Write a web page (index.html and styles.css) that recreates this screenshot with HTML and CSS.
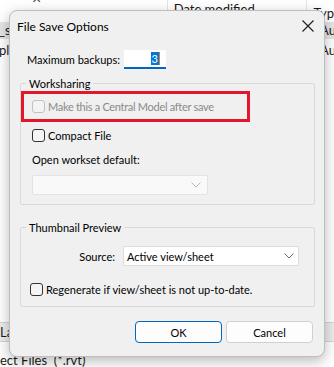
FILE: index.html
```html
<!DOCTYPE html>
<html lang="en">
  <head>
    <meta charset="UTF-8" />
    <meta name="viewport" content="width=device-width, initial-scale=1.0" />
    <title>File Save Options</title>
    <link rel="stylesheet" href="styles.css">
  </head>

  <body>
    <div class="explorer">
      <div class="cols">
        <div class="col name"><span class="x-glyph">×</span></div>
        <div class="col date">Date modified</div>
        <div class="col type">Typ</div>
      </div>
      <div class="row selected">
        <span class="cell-left">_sa</span>
        <span class="cell-right">Au</span>
      </div>
      <div class="row">
        <span class="cell-left">pl</span>
        <span class="cell-right">Au</span>
      </div>
      <div class="spacer"></div>
      <div class="statusbar"><span>La</span></div>
      <div class="filter">ect Files&nbsp; (*.rvt)</div>
    </div>

    <div class="dialog">
      <div class="titlebar">
        <span class="title">File Save Options</span>
        <svg class="close" width="12" height="12" viewBox="0 0 12 12">
          <path d="M0.5 0.5 L11.5 11.5 M11.5 0.5 L0.5 11.5" stroke="#1a1a1a" stroke-width="1.1" fill="none" />
        </svg>
      </div>

      <div class="content">
        <div class="backups">
          <label>Maximum backups:</label>
          <div class="numbox"><span class="sel">3</span><span class="caret"></span></div>
        </div>

        <fieldset class="group worksharing">
          <legend>Worksharing</legend>
          <div class="highlight">
            <span class="check disabled"></span>
            <span class="muted">Make this a Central Model after save</span>
          </div>
          <div class="check-row compact">
            <span class="check"></span>
            <span>Compact File</span>
          </div>
          <div class="field-label">Open workset default:</div>
          <div class="select disabled-select">
            <svg class="chev" width="10" height="6" viewBox="0 0 10 6">
              <path d="M0.5 0.5 L5 5 L9.5 0.5" stroke="#b4b4b4" stroke-width="1" fill="none" />
            </svg>
          </div>
        </fieldset>

        <fieldset class="group thumbnail">
          <legend>Thumbnail Preview</legend>
          <div class="source-row">
            <label>Source:</label>
            <div class="select">
              <span>Active view/sheet</span>
              <svg class="chev" width="10" height="6" viewBox="0 0 10 6">
                <path d="M0.5 0.5 L5 5 L9.5 0.5" stroke="#6a6a6a" stroke-width="1" fill="none" />
              </svg>
            </div>
          </div>
          <div class="check-row regen">
            <span class="check"></span>
            <span>Regenerate if view/sheet is not up-to-date.</span>
          </div>
        </fieldset>

        <div class="buttons">
          <button class="btn primary">OK</button>
          <button class="btn">Cancel</button>
        </div>
      </div>
    </div>
  </body>
</html>
```

FILE: styles.css
```css
* {
  margin: 0;
  padding: 0;
  box-sizing: border-box;
}

body {
  font-family: Lato, "Noto Sans", sans-serif;
  font-size: 11px;
  color: #000;
  background: #fff;
  width: 334px;
  height: 367px;
  overflow: hidden;
  position: relative;
}

/* explorer window behind the dialog */

.explorer {
  display: flex;
  flex-direction: column;
  height: 367px;
  color: #1a1a1a;
}

.cols {
  display: flex;
  height: 22px;
  overflow: hidden;
}

.col {
  line-height: 20px;
  font-size: 13px;
}

.col.name {
  width: 170px;
  padding-left: 32px;
}

.x-glyph {
  display: block;
  margin-top: -12px;
  font-size: 16px;
  color: #444;
}

.col.date {
  width: 143px;
  padding-left: 6px;
  margin-top: -1px;
  border-left: 1px solid #e5e5e5;
}

.col.type {
  flex: 1;
  padding-left: 6px;
  padding-top: 3px;
  border-left: 1px solid #e5e5e5;
}

.row {
  display: flex;
  justify-content: space-between;
  height: 17px;
  line-height: 17px;
  font-size: 13px;
}

.row.selected {
  background: #e5e5e5;
  margin-bottom: 3px;
}

.cell-left {
  margin-left: -1px;
}

.cell-right {
  width: 14px;
  overflow: hidden;
}

.spacer {
  flex: 1;
}

.statusbar {
  height: 20px;
  margin-bottom: 12px;
  border-top: 1px solid #d5d5d5;
  border-bottom: 1px solid #d5d5d5;
  background: #ececec;
  font-size: 13px;
  line-height: 18px;
}

.filter {
  font-size: 13px;
  line-height: 13px;
}

/* dialog */

.dialog {
  position: absolute;
  left: 9px;
  top: 10px;
  width: 316px;
  height: 347px;
  background: #f0f0f0;
  border: 1px solid #bdbdbd;
  border-radius: 8px;
  box-shadow: 0 4px 14px rgba(0, 0, 0, 0.28);
}

.titlebar {
  display: flex;
  align-items: center;
  justify-content: space-between;
  height: 30px;
  padding: 0 10px 0 7px;
}

.title {
  font-size: 12px;
}

.content {
  padding: 0 9px 0 10px;
}

.backups {
  display: flex;
  align-items: center;
  gap: 4px;
  height: 19px;
  margin-top: 9px;
  padding-left: 7px;
}

.numbox {
  display: flex;
  align-items: center;
  justify-content: flex-end;
  width: 42px;
  height: 19px;
  background: #fff;
  border-bottom: 2px solid #0067c0;
  padding-right: 6px;
}

.sel {
  background: #0078d7;
  color: #fff;
  line-height: 13px;
  padding: 0 1px;
}

.caret {
  width: 1px;
  height: 13px;
  background: #e07b2a;
}

.group {
  border: 1px solid #d9d9d9;
  border-radius: 2px;
  margin-top: 7px;
}

.group legend {
  margin-left: 5px;
  padding: 0 3px;
  line-height: 15px;
}

.highlight {
  display: flex;
  align-items: center;
  gap: 3px;
  width: 229px;
  height: 31px;
  padding-left: 8px;
  border: 3px solid #e3162a;
}

.muted {
  color: #8a8a8a;
  letter-spacing: -0.3px;
}

.check {
  width: 13px;
  height: 13px;
  border: 1px solid #333;
  border-radius: 3px;
  background: #f5f5f5;
  flex: none;
}

.check.disabled {
  border-color: #c2c2c2;
  background: #f4f4f4;
}

.check-row {
  display: flex;
  align-items: center;
  gap: 3px;
  height: 16px;
}

.compact {
  margin-top: 5px;
  padding-left: 11px;
}

.field-label {
  margin-top: 9px;
  padding-left: 11px;
  line-height: 16px;
}

.select {
  display: flex;
  align-items: center;
  justify-content: space-between;
  height: 20px;
  background: #fff;
  border: 1px solid #dcdcdc;
  border-radius: 2px;
  padding: 0 4px 0 3px;
}

.disabled-select {
  width: 176px;
  margin: 7px 0 9px 11px;
  background: #f9f9f9;
  border-color: #e3e3e3;
  justify-content: flex-end;
  padding-right: 6px;
}

.thumbnail {
  margin-top: 15px;
}

.source-row {
  display: flex;
  align-items: center;
  margin-top: 11px;
}

.source-row label {
  width: 102px;
  text-align: right;
  padding-right: 8px;
}

.source-row .select {
  width: 176px;
}

.regen {
  margin: 15px 0 9px 9px;
}

.buttons {
  display: flex;
  justify-content: flex-end;
  gap: 4px;
  margin-top: 14px;
  padding-right: 2px;
}

.btn {
  width: 87px;
  height: 22px;
  font-family: inherit;
  font-size: 11px;
  background: #fdfdfd;
  border: 1px solid #d0d0d0;
  border-radius: 4px;
  color: #000;
}

.btn.primary {
  border-color: #0067c0;
}
```
